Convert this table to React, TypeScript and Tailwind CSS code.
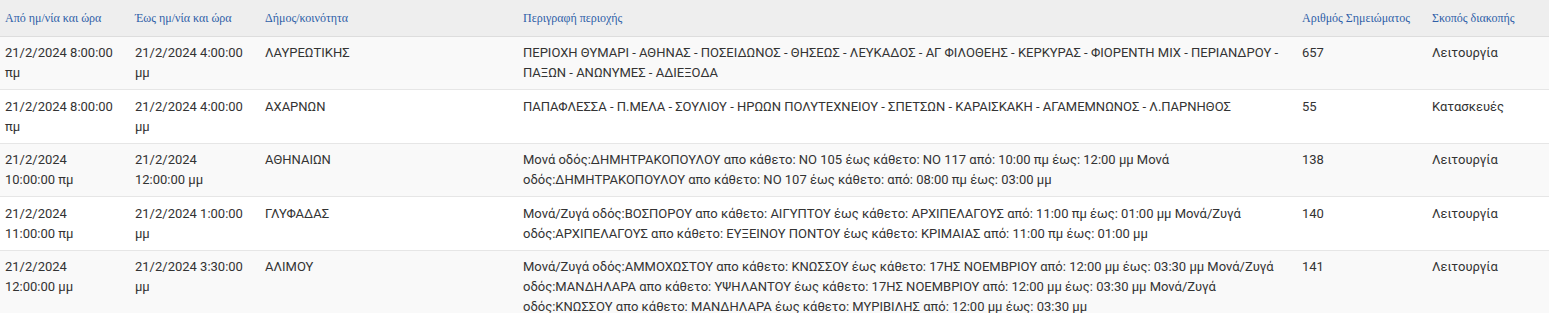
const rows = [
  {
    from: '21/2/2024 8:00:00 πμ',
    to: '21/2/2024 4:00:00 μμ',
    area: 'ΛΑΥΡΕΩΤΙΚΗΣ',
    desc: 'ΠΕΡΙΟΧΗ ΘΥΜΑΡΙ - ΑΘΗΝΑΣ - ΠΟΣΕΙΔΩΝΟΣ - ΘΗΣΕΩΣ - ΛΕΥΚΑΔΟΣ - ΑΓ ΦΙΛΟΘΕΗΣ - ΚΕΡΚΥΡΑΣ - ΦΙΟΡΕΝΤΗ ΜΙΧ - ΠΕΡΙΑΝΔΡΟΥ - ΠΑΞΩΝ - ΑΝΩΝΥΜΕΣ - ΑΔΙΕΞΟΔΑ',
    num: '657',
    reason: 'Λειτουργία',
  },
  {
    from: '21/2/2024 8:00:00 πμ',
    to: '21/2/2024 4:00:00 μμ',
    area: 'ΑΧΑΡΝΩΝ',
    desc: 'ΠΑΠΑΦΛΕΣΣΑ - Π.ΜΕΛΑ - ΣΟΥΛΙΟΥ - ΗΡΩΩΝ ΠΟΛΥΤΕΧΝΕΙΟΥ - ΣΠΕΤΣΩΝ - ΚΑΡΑΙΣΚΑΚΗ - ΑΓΑΜΕΜΝΩΝΟΣ - Λ.ΠΑΡΝΗΘΟΣ',
    num: '55',
    reason: 'Κατασκευές',
  },
  {
    from: '21/2/2024 10:00:00 πμ',
    to: '21/2/2024 12:00:00 μμ',
    area: 'ΑΘΗΝΑΙΩΝ',
    desc: 'Μονά οδός:ΔΗΜΗΤΡΑΚΟΠΟΥΛΟΥ απο κάθετο: ΝΟ 105 έως κάθετο: ΝΟ 117 από: 10:00 πμ έως: 12:00 μμ Μονά οδός:ΔΗΜΗΤΡΑΚΟΠΟΥΛΟΥ απο κάθετο: ΝΟ 107 έως κάθετο: από: 08:00 πμ έως: 03:00 μμ',
    num: '138',
    reason: 'Λειτουργία',
  },
  {
    from: '21/2/2024 11:00:00 πμ',
    to: '21/2/2024 1:00:00 μμ',
    area: 'ΓΛΥΦΑΔΑΣ',
    desc: 'Μονά/Ζυγά οδός:ΒΟΣΠΟΡΟΥ απο κάθετο: ΑΙΓΥΠΤΟΥ έως κάθετο: ΑΡΧΙΠΕΛΑΓΟΥΣ από: 11:00 πμ έως: 01:00 μμ Μονά/Ζυγά οδός:ΑΡΧΙΠΕΛΑΓΟΥΣ απο κάθετο: ΕΥΞΕΙΝΟΥ ΠΟΝΤΟΥ έως κάθετο: ΚΡΙΜΑΙΑΣ από: 11:00 πμ έως: 01:00 μμ',
    num: '140',
    reason: 'Λειτουργία',
  },
  {
    from: '21/2/2024 12:00:00 μμ',
    to: '21/2/2024 3:30:00 μμ',
    area: 'ΑΛΙΜΟΥ',
    desc: 'Μονά/Ζυγά οδός:ΑΜΜΟΧΩΣΤΟΥ απο κάθετο: ΚΝΩΣΣΟΥ έως κάθετο: 17ΗΣ ΝΟΕΜΒΡΙΟΥ από: 12:00 μμ έως: 03:30 μμ Μονά/Ζυγά οδός:ΜΑΝΔΗΛΑΡΑ απο κάθετο: ΥΨΗΛΑΝΤΟΥ έως κάθετο: 17ΗΣ ΝΟΕΜΒΡΙΟΥ από: 12:00 μμ έως: 03:30 μμ Μονά/Ζυγά οδός:ΚΝΩΣΣΟΥ απο κάθετο: ΜΑΝΔΗΛΑΡΑ έως κάθετο: ΜΥΡΙΒΙΛΗΣ από: 12:00 μμ έως: 03:30 μμ',
    num: '141',
    reason: 'Λειτουργία',
  },
];

const headers = [
  'Από ημ/νία και ώρα',
  'Έως ημ/νία και ώρα',
  'Δήμος/κοινότητα',
  'Περιγραφή περιοχής',
  'Αριθμός Σημειώματος',
  'Σκοπός διακοπής',
];

export default function App() {
  return (
    <div className="w-[1549px] h-[313px] overflow-hidden bg-white">
      <table className="w-full table-fixed border-collapse">
        <colgroup>
          <col className="w-[130px]" />
          <col className="w-[130px]" />
          <col className="w-[258px]" />
          <col className="w-[779px]" />
          <col className="w-[130px]" />
          <col />
        </colgroup>
        <thead>
          <tr className="bg-[#eeeeee] border-b border-[#dddddd]">
            {headers.map((h) => (
              <th
                key={h}
                className="h-[36px] pl-[5px] pr-[10px] text-left align-middle font-normal text-[12px] text-[#2f5fa8] font-['Liberation_Serif',serif] whitespace-nowrap"
              >
                {h}
              </th>
            ))}
          </tr>
        </thead>
        <tbody className="font-['Roboto',sans-serif] text-[13px] leading-[20px] text-[#333333]">
          {rows.map((r, i) => (
            <tr
              key={i}
              className={`border-b border-[#e6e6e6] ${i % 2 === 0 ? 'bg-[#f9f9f9]' : 'bg-white'}`}
            >
              <td className="pl-[5px] pr-[12px] pt-[6.5px] pb-[6px] align-top">{r.from}</td>
              <td className="pl-[5px] pr-[12px] pt-[6.5px] pb-[6px] align-top">{r.to}</td>
              <td className="pl-[5px] pr-[12px] pt-[6.5px] pb-[6px] align-top">{r.area}</td>
              <td className="pl-[5px] pr-[10px] pt-[6.5px] pb-[6px] align-top">{r.desc}</td>
              <td className="pl-[5px] pr-[10px] pt-[6.5px] pb-[6px] align-top">{r.num}</td>
              <td className="pl-[5px] pr-[10px] pt-[6.5px] pb-[6px] align-top">{r.reason}</td>
            </tr>
          ))}
        </tbody>
      </table>
    </div>
  );
}
